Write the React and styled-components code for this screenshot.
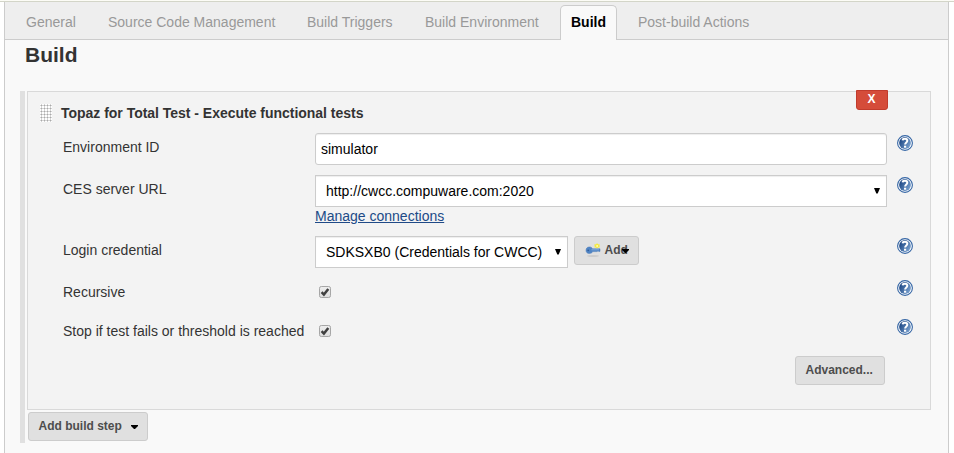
import React from "react";
import styled, { createGlobalStyle, css } from "styled-components";

const GlobalStyle = createGlobalStyle`
  *, *::before, *::after { box-sizing: border-box; }
  html, body { margin: 0; padding: 0; background: #fff; overflow: hidden; }
  body { font: 14px/20px "Liberation Sans", Arial, sans-serif; color: #333; }
`;

const Page = styled.div`
  height: 453px;
  padding: 0 5px 0 4px;
  border-top: 1px solid #fcfcf6;
  background: linear-gradient(#d3d5c8, #d3d5c8) 0 0 / 100% 1px no-repeat #fff;
`;

const Panel = styled.main`
  margin-top: 1px;
  height: 451px;
  border: 1px solid #ccc;
  border-width: 0 1px;
  background: #f9f9f9;
`;

const TabBar = styled.nav`
  display: flex;
  align-items: flex-end;
  height: 38px;
  padding-left: 11px;
  background: #eee;
  box-shadow: inset 0 -1px #ccc;
`;

const Tab = styled.a`
  width: ${(p) => p.$width}px;
  height: 35px;
  margin-right: ${(p) => p.$gap}px;
  padding: 7px 0 0 10px;
  white-space: nowrap;
  color: #999;
  ${(p) =>
    p.$active &&
    css`
      border: 1px solid #ccc;
      border-bottom: 0;
      border-radius: 5px 5px 0 0;
      padding-top: 6px;
      background: #f9f9f9;
      color: #000;
      font-weight: bold;
    `}
`;

const Heading = styled.h1`
  margin: 0;
  padding: 3px 0 0 20px;
  height: 51px;
  font-size: 21px;
  line-height: 24px;
`;

const Steps = styled.section`
  margin-left: 15px;
  width: 911px;
  height: 352px;
  border-left: 5px solid #e0e0e0;
  padding-left: 2px;
`;

const StepCard = styled.article`
  width: 904px;
  height: 319px;
  border: 1px solid #d9d9d9;
  background: #f3f3f3;
`;

const StepHeader = styled.header`
  display: flex;
  align-items: flex-start;
  height: 41px;
  padding-left: 12px;
`;

const Grip = styled.span`
  flex: none;
  width: 12px;
  height: 18px;
  margin-top: 12px;
  background:
    radial-gradient(circle at 1.5px 1.5px, #aaa 0.8px, transparent 1.2px) 0 0 / 3px 3px,
    #fff;
`;

const StepTitle = styled.b`
  flex: 1;
  margin: 11px 0 0 9px;
  letter-spacing: -0.02px;
`;

const DeleteButton = styled.button`
  width: 32px;
  height: 20px;
  margin: -2px 42px 0 0;
  padding: 0 1px 1px 0;
  border: 1px solid #c13b2c;
  border-radius: 0 0 3px 3px;
  background: #d54c3a;
  color: #fff;
  font: bold 12px/17px "Liberation Sans", Arial, sans-serif;
`;

const Row = styled.div`
  display: grid;
  grid-template-columns: 252px 572px 1fr;
  align-items: start;
  height: ${(p) => p.$height}px;
  margin-left: 35px;
`;

const Label = styled.label`
  padding-top: 4px;
  white-space: nowrap;
`;

const Controls = styled.div`
  display: flex;
  flex-wrap: wrap;
  align-items: flex-start;
  gap: 0 6px;
`;

const TextInput = styled.input`
  width: 572px;
  height: 32px;
  padding: 0 5px;
  border: 1px solid #ccc;
  border-radius: 3px;
  box-shadow: inset 0 1px 1px rgba(0, 0, 0, 0.07);
  background: #fff;
  color: #000;
  font: 14px "Liberation Sans", Arial, sans-serif;
`;

const SelectBox = styled.div`
  display: flex;
  align-items: center;
  justify-content: space-between;
  width: ${(p) => p.$width}px;
  height: 32px;
  padding: 0 6px 0 10px;
  border: 1px solid #ccc;
  box-shadow: inset 0 1px 1px rgba(0, 0, 0, 0.07);
  background: #fff;
  color: #000;
  white-space: nowrap;
`;

const Link = styled.a`
  margin-top: -1px;
  color: #204a87;
  text-decoration: underline;
`;

const Button = styled.button`
  display: flex;
  align-items: center;
  width: ${(p) => p.$width}px;
  height: 29px;
  padding: 0 0 1px 9.5px;
  border: 1px solid #ccc;
  border-radius: 3px;
  background: #e0e0e0;
  color: #4d4d4d;
  white-space: nowrap;
  font: bold 12px "Liberation Sans", Arial, sans-serif;
`;

const Caret = styled.svg`
  flex: none;
  margin: ${(p) => p.$top}px 0 0 ${(p) => p.$offset}px;
`;

const HelpSvg = styled.svg`
  margin: 2px 0 0 10px;
`;

const CheckSvg = styled.svg`
  margin: 8px 0 0 4px;
`;

const Footer = styled.div`
  display: flex;
  justify-content: flex-end;
  padding-right: 45px;
`;

const AddStep = styled.div`
  padding: 2px 0 0 1px;
`;

function HelpIcon() {
  return (
    <HelpSvg width="16" height="16" viewBox="0 0 16 16">
      <defs>
        <linearGradient id="helpFill" x1="0" y1="0.2" x2="1" y2="0.8">
          <stop offset="0.1" stopColor="#204a87" />
          <stop offset="1" stopColor="#7ea6d3" />
        </linearGradient>
      </defs>
      <circle cx="8" cy="8" r="7.4" fill="#fff" stroke="#3465a4" strokeWidth="1.1" />
      <circle cx="8" cy="8" r="5.9" fill="url(#helpFill)" />
      <path d="M5.6 5.4C5.8 3.3 10.3 3.2 10.3 5.8C10.3 7.5 8.1 7.4 8.1 9.6" fill="none" stroke="#fff" strokeWidth="2" />
      <rect x="7" y="10.7" width="2.2" height="2" fill="#fff" />
    </HelpSvg>
  );
}

function SelectArrow() {
  return (
    <svg width="6" height="6" viewBox="0 0 6 6">
      <path d="M0 0H6L3.7 5.5H2.3Z" fill="#000" />
    </svg>
  );
}

function DownCaret({ offset, top }) {
  return (
    <Caret $offset={offset} $top={top} width="7" height="4" viewBox="0 0 7 4">
      <path d="M0 0H7V1L4 4H3L0 1Z" fill="#000" />
    </Caret>
  );
}

function Checked() {
  return (
    <CheckSvg width="13" height="13" viewBox="0 0 13 13">
      <defs>
        <linearGradient id="boxFill" x1="0" y1="0" x2="0" y2="1">
          <stop offset="0" stopColor="#eee" />
          <stop offset="1" stopColor="#ddd" />
        </linearGradient>
      </defs>
      <rect x="0.5" y="0.5" width="11" height="11" rx="1.8" fill="url(#boxFill)" stroke="#a6a6a6" />
      <path d="M2.6 6.1L4.9 8.5L9.3 3" fill="none" stroke="#404040" strokeWidth="2.5" />
    </CheckSvg>
  );
}

const KeySvg = styled.svg`
  flex: none;
  margin-right: 4px;
`;

function KeyIcon() {
  return (
    <KeySvg width="16" height="16" viewBox="0 0 16 16">
      <ellipse cx="8" cy="14" rx="6" ry="0.9" fill="#bbb" opacity="0.55" />
      <path d="M4 5C6 4.6 7 5.8 7.5 6.8H15V9.4H14L13 8.9L12 9.6H7.7C7 11 5.8 11.5 4.3 11.5C2 11.5 1 10 1 8.3C1 6.4 2.2 5.1 4 5Z" fill="#4f84c4" stroke="#4a7ab8" strokeWidth="0.5" />
      <path d="M6.5 7.8H14" stroke="#8db4e2" strokeWidth="0.8" />
      <circle cx="3.2" cy="8.3" r="0.9" fill="#315c99" />
      <path d="M12 1.2L13.2 2.2L14.8 2.4L14.5 4L14.7 5.6L13 5.5L12 6.5L11 5.5L9.5 5.6L9.7 4L9.2 2.5L11 2.3Z" fill="#f4e93c" />
      <circle cx="12.1" cy="3.9" r="1" fill="#fffbb0" />
    </KeySvg>
  );
}

const TABS = [
  { label: "General", width: 70, gap: 12 },
  { label: "Source Code Management", width: 188, gap: 11 },
  { label: "Build Triggers", width: 106, gap: 12 },
  { label: "Build Environment", width: 133, gap: 12 },
  { label: "Build", width: 57, gap: 11, active: true },
  { label: "Post-build Actions", width: 132, gap: 0 },
];

export default function App() {
  return (
    <>
      <GlobalStyle />
      <Page>
        <Panel>
          <TabBar>
            {TABS.map((t) => (
              <Tab key={t.label} $width={t.width} $active={t.active} $gap={t.gap}>
                {t.label}
              </Tab>
            ))}
          </TabBar>
          <Heading>Build</Heading>
          <Steps>
            <StepCard>
              <StepHeader>
                <Grip />
                <StepTitle>Topaz for Total Test - Execute functional tests</StepTitle>
                <DeleteButton>X</DeleteButton>
              </StepHeader>
              <Row $height={42}>
                <Label>Environment ID</Label>
                <Controls>
                  <TextInput defaultValue="simulator" />
                </Controls>
                <HelpIcon />
              </Row>
              <Row $height={61}>
                <Label>CES server URL</Label>
                <Controls>
                  <SelectBox $width={572}>
                    http://cwcc.compuware.com:2020
                    <SelectArrow />
                  </SelectBox>
                  <Link>Manage connections</Link>
                </Controls>
                <HelpIcon />
              </Row>
              <Row $height={42}>
                <Label>Login credential</Label>
                <Controls>
                  <SelectBox $width={253}>
                    SDKSXB0 (Credentials for CWCC)
                    <SelectArrow />
                  </SelectBox>
                  <Button $width={65}>
                    <KeyIcon />
                    Add
                    <DownCaret offset={-6} top={1} />
                  </Button>
                </Controls>
                <HelpIcon />
              </Row>
              <Row $height={39}>
                <Label>Recursive</Label>
                <Checked />
                <HelpIcon />
              </Row>
              <Row $height={39}>
                <Label>Stop if test fails or threshold is reached</Label>
                <Checked />
                <HelpIcon />
              </Row>
              <Footer>
                <Button $width={90}>Advanced...</Button>
              </Footer>
            </StepCard>
            <AddStep>
              <Button $width={120}>
                Add build step
                <DownCaret offset={9} top={1} />
              </Button>
            </AddStep>
          </Steps>
        </Panel>
      </Page>
    </>
  );
}
